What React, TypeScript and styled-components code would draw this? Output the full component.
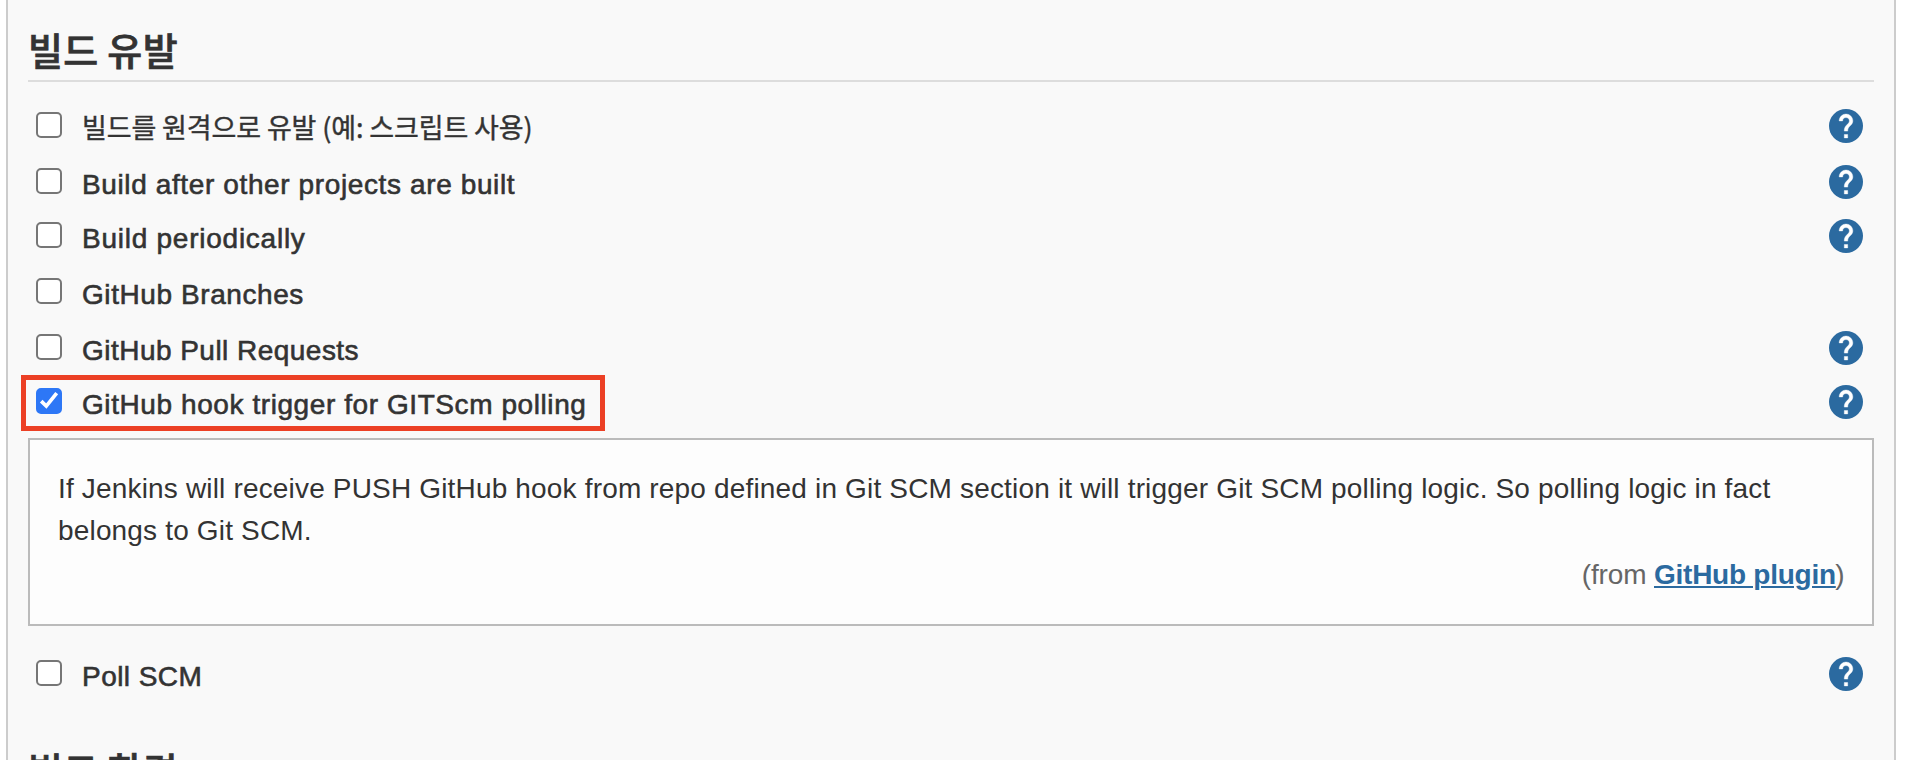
import React from "react";
import styled, { createGlobalStyle } from "styled-components";

const GlobalStyle = createGlobalStyle`
  *, *::before, *::after { box-sizing: border-box; }
  body {
    margin: 0;
    background: #fff;
    color: #333;
    font-family: "Liberation Sans", "Noto Sans CJK KR", sans-serif;
    font-size: 28px;
  }
`;

const Page = styled.div`
  height: 760px;
  padding: 0 16px 0 6px;
  overflow: hidden;
`;

const Panel = styled.main`
  min-height: 100%;
  padding: 24px 20px 0;
  background: #f9f9f9;
  border: solid #ccc;
  border-width: 0 2px;
`;

const SectionTitle = styled.h2`
  margin: 0;
  padding: 0 0 6px;
  border-bottom: 2px solid #ddd;
  font: 500 38px/50px "Noto Sans CJK KR", sans-serif;
  letter-spacing: 0.3px;
  -webkit-text-stroke: 0.7px #333;
`;

const TriggerList = styled.div`
  padding-top: 27px;
`;

const Row = styled.div<{ $height: number }>`
  position: relative;
  display: flex;
  align-items: flex-start;
  height: ${(p) => p.$height}px;
  padding: 0 11px 0 8px;
`;

const Option = styled.label`
  display: flex;
  flex: 1;
  gap: 20px;
`;

const HiddenInput = styled.input`
  position: absolute;
  opacity: 0;
  pointer-events: none;
`;

const Box = styled.span<{ $checked: boolean }>`
  display: block;
  flex: none;
  width: 26px;
  height: 26px;
  margin-top: 3px;
  border: 2px solid ${(p) => (p.$checked ? "#2d77f6" : "#767676")};
  border-radius: 5px;
  background: ${(p) => (p.$checked ? "#2d77f6" : "#fff")};

  svg { display: block; margin: -2px; }
`;

const OptionText = styled.span<{ $spacing: number }>`
  margin-top: 3px;
  line-height: 34px;
  letter-spacing: ${(p) => p.$spacing}px;
  -webkit-text-stroke: 0.6px #333;
  white-space: nowrap;
`;

const KoreanOptionText = styled.span`
  margin-top: 1px;
  font: 400 27px/34px "Noto Sans CJK KR", sans-serif;
  letter-spacing: -0.12px;
  -webkit-text-stroke: 0.4px #333;
  white-space: nowrap;
`;

const HelpButton = styled.button`
  width: 34px;
  height: 34px;
  padding: 0;
  border: 0;
  border-radius: 50%;
  background: none;

  svg { display: block; }
`;

const Highlight = styled.div`
  position: absolute;
  top: -10px;
  left: -7px;
  width: 584px;
  height: 56px;
  border: 5px solid #ec4025;
  pointer-events: none;
`;

const HelpPanel = styled.section`
  height: 188px;
  margin-bottom: 31px;
  padding: 28px 28px 0;
  border: 2px solid #bbb;
  background: #fdfdfd;
  line-height: 42px;
`;

const HelpText = styled.p`
  margin: 0 0 2px;
  letter-spacing: 0.17px;
`;

const Source = styled.div`
  color: #666;
  text-align: right;
  letter-spacing: -0.15px;
`;

const PluginLink = styled.a`
  color: #2b6aa0;
  font-weight: 700;
  letter-spacing: -0.25px;
  text-decoration: underline;
  text-decoration-thickness: 2px;
  text-underline-offset: 2px;
`;

const ClosingParen = styled.span`
  margin: 0 -0.5px 0 -0.5px;
`;

const NextSection = styled.div`
  padding-top: 31px;
`;

function HelpIcon() {
  return (
    <svg width="34" height="34" viewBox="2 2 20 20">
      <circle cx="12" cy="12" r="10" fill="#2b6aa0" />
      <path
        fill="#fff"
        stroke="#fff"
        strokeWidth="0.25"
        d="M13 19h-2v-2h2v2zM15.07 11.25l-.9.92C13.45 12.9 13 13.5 13 15h-2v-.5c0-1.1.45-2.1 1.17-2.83l1.24-1.26c.37-.36.59-.86.59-1.41 0-1.1-.9-2-2-2s-2 .9-2 2H8c0-2.21 1.79-4 4-4s4 1.79 4 4c0 .88-.36 1.68-.93 2.25z"
      />
    </svg>
  );
}

function CheckMark() {
  return (
    <svg width="26" height="26" viewBox="0 0 26 26">
      <path d="M5.2 13.2l5.1 4.9L20.7 5.2" fill="none" stroke="#fff" strokeWidth="3.7" />
    </svg>
  );
}

type TriggerProps = {
  label: string;
  height: number;
  spacing?: number;
  korean?: boolean;
  checked?: boolean;
  help?: boolean;
  highlighted?: boolean;
};

function Trigger({ label, height, spacing = 0, korean, checked = false, help = true, highlighted }: TriggerProps) {
  return (
    <Row $height={height}>
      <Option>
        <HiddenInput type="checkbox" defaultChecked={checked} />
        <Box $checked={checked}>{checked && <CheckMark />}</Box>
        {korean ? <KoreanOptionText>{label}</KoreanOptionText> : <OptionText $spacing={spacing}>{label}</OptionText>}
      </Option>
      {help && (
        <HelpButton type="button" aria-label="Help">
          <HelpIcon />
        </HelpButton>
      )}
      {highlighted && <Highlight />}
    </Row>
  );
}

export default function App() {
  return (
    <Page>
      <GlobalStyle />
      <Panel>
        <SectionTitle>빌드 유발</SectionTitle>
        <TriggerList>
          <Trigger label="빌드를 원격으로 유발 (예: 스크립트 사용)" height={56} korean />
          <Trigger label="Build after other projects are built" height={54} spacing={0.62} />
          <Trigger label="Build periodically" height={56} spacing={0.75} />
          <Trigger label="GitHub Branches" height={56} spacing={0.58} help={false} />
          <Trigger label="GitHub Pull Requests" height={54} spacing={0.47} />
          <Trigger label="GitHub hook trigger for GITScm polling" height={53} spacing={0.58} checked highlighted />
          <HelpPanel>
            <HelpText>
              If Jenkins will receive PUSH GitHub hook from repo defined in Git SCM section it will trigger Git SCM
              polling logic. So polling logic in fact belongs to Git SCM.
            </HelpText>
            <Source>
              (from <PluginLink>GitHub plugin</PluginLink>
              <ClosingParen>)</ClosingParen>
            </Source>
          </HelpPanel>
          <Trigger label="Poll SCM" height={56} spacing={0.45} />
        </TriggerList>
        <NextSection>
          <SectionTitle>빌드 환경</SectionTitle>
        </NextSection>
      </Panel>
    </Page>
  );
}
